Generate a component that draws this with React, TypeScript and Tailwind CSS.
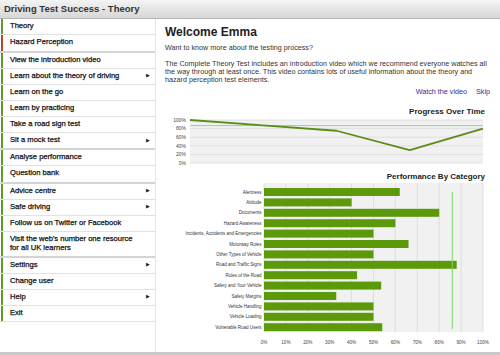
import React from "react";

type MenuItem = {
  label: string;
  arrow?: boolean;
  accent?: "green" | "red";
  groupEnd?: boolean;
  tall?: boolean;
};

const menu: MenuItem[] = [
  { label: "Theory" },
  { label: "Hazard Perception", accent: "red", groupEnd: true },
  { label: "View the introduction video" },
  { label: "Learn about the theory of driving", arrow: true },
  { label: "Learn on the go" },
  { label: "Learn by practicing" },
  { label: "Take a road sign test" },
  { label: "Sit a mock test", arrow: true, groupEnd: true },
  { label: "Analyse performance" },
  { label: "Question bank", groupEnd: true },
  { label: "Advice centre", arrow: true },
  { label: "Safe driving", arrow: true },
  { label: "Follow us on Twitter or Facebook" },
  { label: "Visit the web's number one resource for all UK learners", tall: true, groupEnd: true },
  { label: "Settings", arrow: true },
  { label: "Change user" },
  { label: "Help", arrow: true },
  { label: "Exit" },
];

const categories: [string, number][] = [
  ["Alertness", 62],
  ["Attitude", 40],
  ["Documents", 80],
  ["Hazard Awareness", 60],
  ["Incidents, Accidents and Emergencies", 50],
  ["Motorway Rules", 66],
  ["Other Types of Vehicle", 50],
  ["Road and Traffic Signs", 88],
  ["Rules of the Road", 42.5],
  ["Safety and Your Vehicle", 53.5],
  ["Safety Margins", 33],
  ["Vehicle Handling", 50],
  ["Vehicle Loading", 50],
  ["Vulnerable Road Users", 54],
];

function SideItem({ item }: { item: MenuItem }) {
  const h = item.tall ? "h-[26px]" : item.groupEnd ? "h-[17.5px]" : "h-[16px]";
  const bottom = item.groupEnd ? "border-b-[2.5px] border-[#d4d4d4]" : "border-b border-[#e2e2e2]";
  const accent = item.accent === "red" ? "bg-[#b5443a]" : "bg-[#5f9a2c]";
  return (
    <div className={`flex ${h} ${bottom}`}>
      <div className={`ml-[1px] w-[2px] ${accent}`} />
      <div className="flex flex-1 items-center pl-[7px] pr-[5px]">
        <span className="flex-1 pr-[8px] text-[7.6px] leading-[8.6px] text-[#111] [-webkit-text-stroke:0.25px_#111]">
          {item.label}
        </span>
        {item.arrow && <span className="text-[5px] text-[#222]">▶</span>}
      </div>
    </div>
  );
}

function ProgressChart() {
  const x0 = 25;
  const w = 293;
  const y0 = 3;
  const h = 43;
  const data = [100, 87.5, 75, 30, 80];
  const pts = data
    .map((v, i) => `${x0 + (w * i) / (data.length - 1)},${y0 + h - (h * v) / 100}`)
    .join(" ");
  return (
    <svg width="325" height="50" className="block">
      <rect x={x0} y={y0} width={w} height={h} fill="#f1f1f1" />
      {[0, 20, 40, 60, 80, 100].map((v) => {
        const y = y0 + h - (h * v) / 100;
        return (
          <g key={v}>
            <line x1={x0} x2={x0 + w} y1={y} y2={y} stroke="#dcdcdc" strokeWidth="0.8" />
            <text x={x0 - 4} y={y + 1.7} fontSize="5" textAnchor="end" fill="#444">
              {v}%
            </text>
          </g>
        );
      })}
      <line x1={x0} x2={x0 + w} y1={y0 + h * 0.13} y2={y0 + h * 0.13} stroke="#86d977" strokeWidth="0.9" />
      <polyline points={pts} fill="none" stroke="#5a8d17" strokeWidth="1.8" strokeLinejoin="round" />
    </svg>
  );
}

function CategoryChart() {
  const x0 = 99;
  const w = 219;
  const top = 1;
  const bottom = 150;
  return (
    <svg width="325" height="166" className="block">
      <rect x={x0} y={top} width={w} height={bottom - top} fill="#f1f1f1" />
      {Array.from({ length: 11 }, (_, i) => i * 10).map((v) => {
        const x = x0 + (w * v) / 100;
        return (
          <g key={v}>
            <line x1={x} x2={x} y1={top} y2={bottom} stroke="#d9d9d9" strokeWidth="0.8" />
            <text x={x} y={161.5} fontSize="4.6" textAnchor="middle" fill="#444">
              {v}%
            </text>
          </g>
        );
      })}
      {categories.map(([name, v], i) => {
        const cy = 10 + i * 10.4;
        return (
          <g key={name}>
            <rect x={x0} y={cy - 4} width={(w * v) / 100} height={8} fill="#5c9a0c" />
            <text x={x0 - 2.5} y={cy + 1.6} fontSize="4.5" textAnchor="end" fill="#333">
              {name}
            </text>
          </g>
        );
      })}
      <line x1={x0 + w * 0.86} x2={x0 + w * 0.86} y1={10} y2={147} stroke="#7fd56c" strokeWidth="1" />
    </svg>
  );
}

export default function App() {
  return (
    <div
      className="flex h-[355px] w-[500px] flex-col overflow-hidden bg-white"
      style={{ fontFamily: '"Liberation Sans", Arial, sans-serif' }}
    >
      <div className="flex h-[19px] items-center border-b border-[#b4b4b4] bg-gradient-to-b from-[#f4f4f4] to-[#d7d7d7] pl-[4px]">
        <span className="text-[9.5px] font-bold text-[#333]">Driving Test Success - Theory</span>
      </div>
      <div className="flex flex-1">
        <div className="w-[156px] border-r border-[#e4e4e4]">
          {menu.map((item) => (
            <SideItem key={item.label} item={item} />
          ))}
        </div>
        <div className="flex-1 pl-[9px] pr-[8px]">
          <h1 className="mt-[6px] text-[12px] font-bold leading-[14px] text-[#222]">Welcome Emma</h1>
          <p className="mt-[5px] text-[7.2px] leading-[8px] text-[#333]">Want to know more about the testing process?</p>
          <p className="mt-[7.5px] text-[7.2px] leading-[8.4px] text-[#333]">
            The Complete Theory Test includes an introduction video which we recommend everyone watches all the
            way through at least once. This video contains lots of useful information about the theory and
            hazard perception test elements.
          </p>
          <div className="mt-[3px] flex justify-end gap-[9px] pr-[2px] text-[7.2px] leading-[8px] text-[#2b2f9a]">
            <span>Watch the video</span>
            <span>Skip</span>
          </div>
          <div className="mt-[11px] pr-[7px] text-right text-[8px] font-bold leading-[10px] text-[#222]">
            Progress Over Time
          </div>
          <ProgressChart />
          <div className="mt-[5px] pr-[7px] text-right text-[8px] font-bold leading-[10px] text-[#222]">
            Performance By Category
          </div>
          <CategoryChart />
        </div>
      </div>
      <div className="h-[3px] bg-[#c9c9c9]" />
    </div>
  );
}
